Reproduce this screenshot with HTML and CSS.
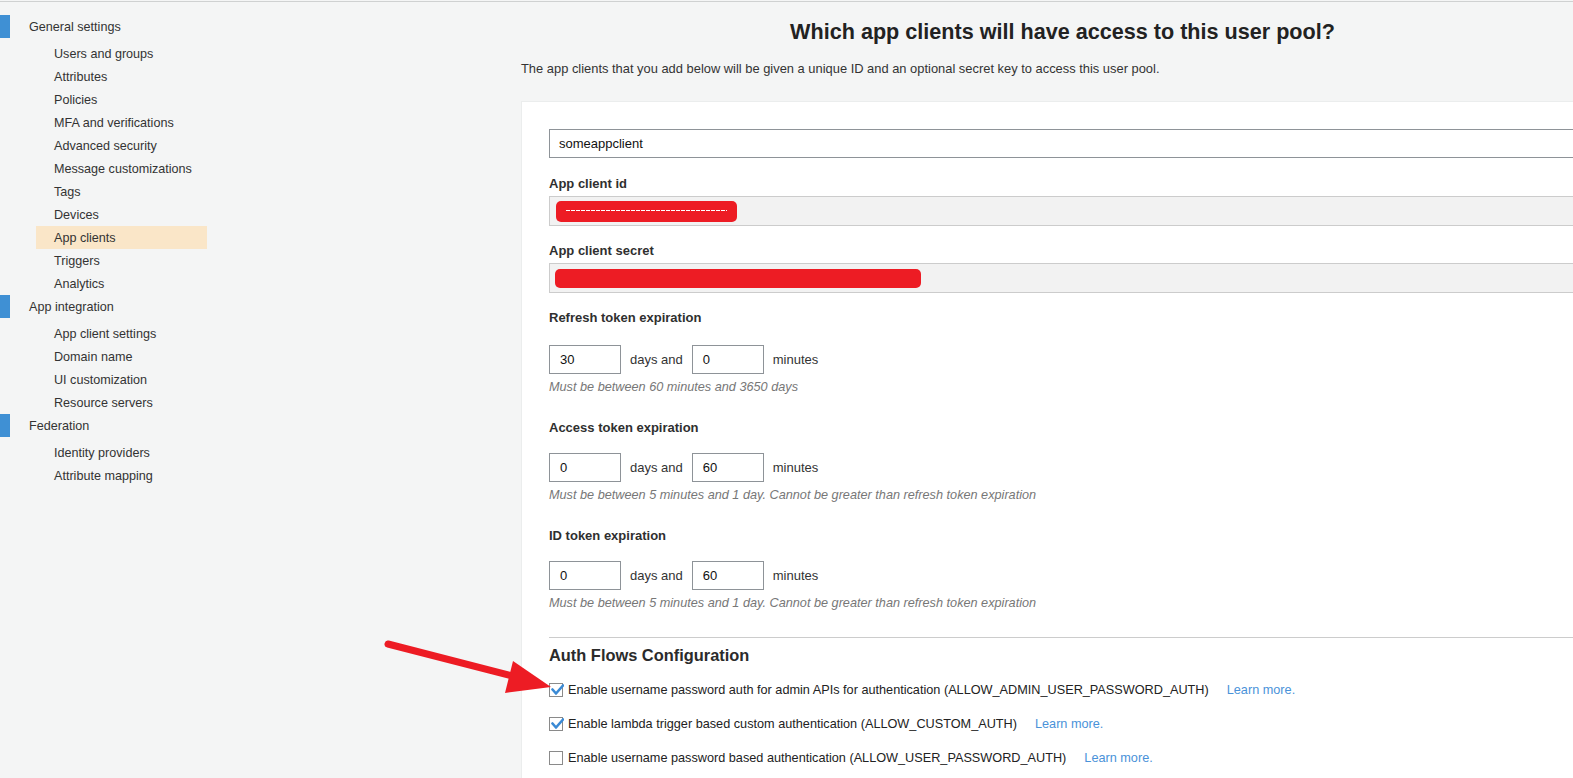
FILE: index.html
```html
<!DOCTYPE html>
<html>
<head>
<meta charset="utf-8">
<link rel="stylesheet" href="styles.css">
</head>
<body>
<div class="page">
  <nav class="sidebar">
    <div class="group">
      <div class="group-head"><span class="marker"></span><span>General settings</span></div>
      <ul class="items">
        <li>Users and groups</li>
        <li>Attributes</li>
        <li>Policies</li>
        <li>MFA and verifications</li>
        <li>Advanced security</li>
        <li>Message customizations</li>
        <li>Tags</li>
        <li>Devices</li>
        <li class="active">App clients</li>
        <li>Triggers</li>
        <li>Analytics</li>
      </ul>
    </div>
    <div class="group">
      <div class="group-head"><span class="marker"></span><span>App integration</span></div>
      <ul class="items">
        <li>App client settings</li>
        <li>Domain name</li>
        <li>UI customization</li>
        <li>Resource servers</li>
      </ul>
    </div>
    <div class="group">
      <div class="group-head"><span class="marker"></span><span>Federation</span></div>
      <ul class="items">
        <li>Identity providers</li>
        <li>Attribute mapping</li>
      </ul>
    </div>
  </nav>

  <main class="main">
    <h1 class="title">Which app clients will have access to this user pool?</h1>
    <p class="subtitle">The app clients that you add below will be given a unique ID and an optional secret key to access this user pool.</p>

    <section class="panel">
      <div class="text-input">someappclient</div>

      <div class="label l-first">App client id</div>
      <div class="readonly"><span class="redact redact-id"><span class="dashes"></span></span></div>

      <div class="label">App client secret</div>
      <div class="readonly"><span class="redact redact-secret"></span></div>

      <div class="label l-token">Refresh token expiration</div>
      <div class="expiry-row">
        <div class="num-input">30</div>
        <span class="unit">days and</span>
        <div class="num-input">0</div>
        <span class="unit">minutes</span>
      </div>
      <div class="hint">Must be between 60 minutes and 3650 days</div>

      <div class="label l-section">Access token expiration</div>
      <div class="expiry-row">
        <div class="num-input">0</div>
        <span class="unit">days and</span>
        <div class="num-input">60</div>
        <span class="unit">minutes</span>
      </div>
      <div class="hint">Must be between 5 minutes and 1 day. Cannot be greater than refresh token expiration</div>

      <div class="label l-section">ID token expiration</div>
      <div class="expiry-row">
        <div class="num-input">0</div>
        <span class="unit">days and</span>
        <div class="num-input">60</div>
        <span class="unit">minutes</span>
      </div>
      <div class="hint">Must be between 5 minutes and 1 day. Cannot be greater than refresh token expiration</div>

      <hr class="sep">
      <h2 class="auth-title">Auth Flows Configuration</h2>

      <div class="check-row">
        <span class="checkbox"><svg viewBox="0 0 14 14" width="14" height="14"><path d="M2.5 6.5 L6 10.5 L13 2.5" fill="none" stroke="#3a8ad5" stroke-width="2.6" stroke-linecap="round" stroke-linejoin="round"/></svg></span>
        <span class="check-label">Enable username password auth for admin APIs for authentication (ALLOW_ADMIN_USER_PASSWORD_AUTH)</span>
        <a class="learn">Learn more.</a>
      </div>
      <div class="check-row">
        <span class="checkbox"><svg viewBox="0 0 14 14" width="14" height="14"><path d="M2.5 6.5 L6 10.5 L13 2.5" fill="none" stroke="#3a8ad5" stroke-width="2.6" stroke-linecap="round" stroke-linejoin="round"/></svg></span>
        <span class="check-label">Enable lambda trigger based custom authentication (ALLOW_CUSTOM_AUTH)</span>
        <a class="learn">Learn more.</a>
      </div>
      <div class="check-row">
        <span class="checkbox"></span>
        <span class="check-label">Enable username password based authentication (ALLOW_USER_PASSWORD_AUTH)</span>
        <a class="learn">Learn more.</a>
      </div>
    </section>
  </main>

  <svg class="arrow" width="180" height="70" viewBox="370 630 180 70">
    <line x1="388" y1="644" x2="516" y2="677" stroke="#ed1c24" stroke-width="7" stroke-linecap="round"/>
    <polygon points="513,661 505,693 551,687" fill="#ed1c24"/>
  </svg>
</div>
</body>
</html>
```

FILE: styles.css
```css
html, body {
  margin: 0;
  padding: 0;
  overflow: hidden;
}
body {
  background: #f4f5f5;
  font-family: "Liberation Sans", Arial, sans-serif;
  color: #333;
  padding-top: 1px;
}
.page {
  position: relative;
  display: flex;
  border-top: 1px solid #cfd1d1;
  height: 776px;
}

/* Sidebar */
.sidebar {
  width: 521px;
  flex: none;
  padding-top: 13px;
  font-size: 12.6px;
}
.group-head {
  display: flex;
  align-items: center;
  height: 23px;
  margin-bottom: 4px;
  color: #333;
}
.marker {
  width: 10px;
  height: 23px;
  background: #3f90d4;
  margin-right: 19px;
}
.items {
  list-style: none;
  margin: 0;
  padding: 0;
}
.items li {
  height: 23px;
  line-height: 25px;
  margin-left: 36px;
  width: 171px;
  padding-left: 18px;
  box-sizing: border-box;
  color: #333;
  white-space: nowrap;
}
.items li.active {
  background: #fae6c8;
}

/* Main */
.main {
  width: 1083px;
  flex: none;
}
.title {
  margin: 17px 0 0;
  text-align: center;
  font-size: 21.6px;
  line-height: 26px;
  font-weight: bold;
  color: #222;
}
.subtitle {
  margin: 16px 0 0;
  font-size: 12.9px;
  line-height: 16px;
  color: #333;
}
.panel {
  margin-top: 24px;
  background: #fff;
  border-top: 1px solid #ebeded;
  border-left: 1px solid #ebeded;
  padding: 27px 0 0 27px;
  height: 700px;
  font-size: 13px;
}
.text-input {
  height: 29px;
  box-sizing: border-box;
  border: 1px solid #8e9398;
  line-height: 27px;
  padding-left: 9px;
  width: 1040px;
  color: #111;
}
.label {
  font-weight: bold;
  font-size: 13px;
  line-height: 16px;
  margin-top: 17px;
  margin-bottom: 4px;
  color: #2f2f2f;
}
.label.l-first { margin-top: 18px; }
.label.l-token { margin-bottom: 19px; }
.label.l-section { margin-top: 26px; margin-bottom: 17px; }
.readonly {
  height: 30px;
  box-sizing: border-box;
  border: 1px solid #cccccc;
  background: #f2f2f2;
  width: 1040px;
  display: flex;
  align-items: center;
  padding-left: 5px;
}
.redact {
  display: block;
  background: #ed1c24;
  border-radius: 5px;
  position: relative;
}
.redact-id {
  width: 181px;
  height: 21px;
  margin-left: 1px;
}
.dashes {
  position: absolute;
  left: 10px;
  right: 10px;
  top: 9px;
  height: 1px;
  background: repeating-linear-gradient(90deg, #fff 0 4px, transparent 4px 5px);
}
.redact-secret {
  width: 366px;
  height: 19px;
}
.expiry-row {
  display: flex;
  align-items: center;
  height: 29px;
}
.num-input {
  width: 72px;
  height: 29px;
  box-sizing: border-box;
  border: 1px solid #8e9398;
  line-height: 27px;
  padding-left: 10px;
  color: #111;
}
.unit {
  margin: 0 9px 0 9px;
  color: #333;
}
.hint {
  margin-top: 6px;
  font-size: 12.7px;
  line-height: 14px;
  font-style: italic;
  color: #777;
}
.sep {
  border: 0;
  border-top: 1px solid #cccccc;
  margin: 27px 0 0;
  width: 1030px;
}
.auth-title {
  margin: 7px 0 0;
  font-size: 16.4px;
  line-height: 20px;
  font-weight: bold;
  color: #2b2b2b;
}
.check-row {
  display: flex;
  align-items: center;
  height: 34px;
}
.auth-title + .check-row { margin-top: 8px; }
.checkbox {
  width: 14px;
  height: 14px;
  box-sizing: border-box;
  border: 1px solid #8a8a8a;
  background: #fff;
  position: relative;
  margin-right: 5px;
  flex: none;
}
.checkbox svg {
  position: absolute;
  left: 0;
  top: -1px;
}
.check-label {
  font-size: 12.7px;
  color: #222;
  white-space: nowrap;
}
.learn {
  margin-left: 18px;
  font-size: 12.7px;
  color: #4a92d9;
  white-space: nowrap;
}

.arrow {
  position: absolute;
  left: 370px;
  top: 628px;
  overflow: visible;
}
```
